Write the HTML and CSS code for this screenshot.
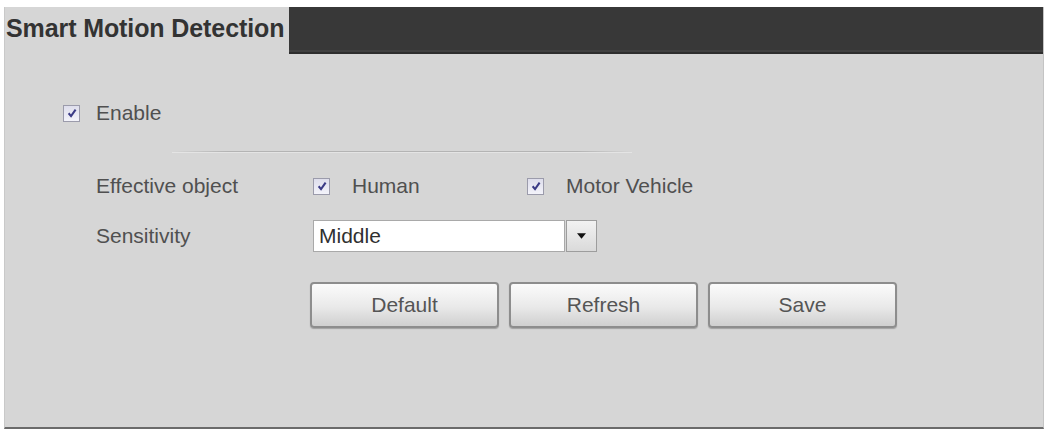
FILE: index.html
```html
<!DOCTYPE html>
<html lang="en">
<head>
  <meta charset="UTF-8">
  <title>Smart Motion Detection</title>
  <link rel="stylesheet" href="styles.css">
</head>
<body>
  <div class="panel">
    <div class="panel-head">
      <h1 class="title">Smart Motion Detection</h1>
      <div class="title-bar"></div>
    </div>

    <div class="panel-body">
      <label class="enable-row">
        <span class="check is-checked">
          <svg viewBox="0 0 10 10"><path d="M2.2 5.2 L4.2 7.6 L8 2.2"/></svg>
        </span>
        <span class="check-text">Enable</span>
      </label>

      <div class="divider"></div>

      <div class="form-row">
        <span class="form-label">Effective object</span>
        <div class="options">
          <label class="option">
            <span class="check is-checked">
              <svg viewBox="0 0 10 10"><path d="M2.2 5.2 L4.2 7.6 L8 2.2"/></svg>
            </span>
            <span class="check-text">Human</span>
          </label>
          <label class="option">
            <span class="check is-checked">
              <svg viewBox="0 0 10 10"><path d="M2.2 5.2 L4.2 7.6 L8 2.2"/></svg>
            </span>
            <span class="check-text">Motor Vehicle</span>
          </label>
        </div>
      </div>

      <div class="form-row select-row">
        <span class="form-label">Sensitivity</span>
        <div class="select">
          <span class="select-value">Middle</span>
          <span class="select-arrow">
            <svg viewBox="0 0 8 5"><path d="M0 0 H8 L4 5 Z"/></svg>
          </span>
        </div>
      </div>

      <div class="button-row">
        <button class="panel-button">Default</button>
        <button class="panel-button">Refresh</button>
        <button class="panel-button">Save</button>
      </div>
    </div>
  </div>
</body>
</html>
```

FILE: styles.css
```css
:root {
  --panel-bg: #d6d6d6;
  --bar-bg: #383838;
  --label: #505050;
  --check-mark: #3b3b86;
}

body {
  margin: 0;
  background: #ffffff;
  font-family: 'Liberation Sans', Arial, sans-serif;
}

.panel {
  margin: 7px 1px 0 4px;
  height: 420px;
  background-color: var(--panel-bg);
  border-left: 1px solid #c9c9c9;
  border-right: 1px solid #c4c4c4;
  border-bottom: 2px solid #6b6b6b;
}

.panel-head {
  display: flex;
  height: 47px;
}

.title {
  width: 283px;
  margin: 0;
  padding-left: 1px;
  font-size: 25px;
  font-weight: bold;
  line-height: 43px;
  letter-spacing: -0.1px;
  color: #333333;
  white-space: nowrap;
}

.title-bar {
  flex: 1;
  background-color: var(--bar-bg);
  border-bottom: 2px solid #2e2e2e;
  box-shadow: inset 0 -2px 0 #414141;
}

.panel-body {
  padding-top: 44px;
}

/* checkboxes */
.enable-row,
.option {
  display: flex;
  align-items: center;
}

.enable-row {
  height: 30px;
  padding-left: 58px;
}

.check {
  width: 15px;
  height: 15px;
  flex: none;
  display: flex;
  align-items: center;
  justify-content: center;
  border: 1px solid #9b9bab;
  background: linear-gradient(#dedeec, #f3f3fa);
}

.check svg {
  width: 12px;
  height: 12px;
  fill: none;
  stroke: var(--check-mark);
  stroke-width: 1.7;
}

.check-text {
  margin-left: 16px;
  font-size: 21px;
  color: var(--label);
}

.option .check-text {
  margin-left: 22px;
}

.divider {
  height: 1px;
  margin: 23px 0 0 167px;
  width: 460px;
  background: linear-gradient(90deg, rgba(170, 170, 170, 0), #b4b4b4 12%, #b4b4b4 88%, rgba(170, 170, 170, 0));
  box-shadow: 0 1px 0 #e4e4e4;
}

/* form rows */
.form-row {
  display: flex;
  align-items: center;
  height: 30px;
  margin-top: 19px;
  padding-left: 91px;
}

.form-label {
  width: 217px;
  font-size: 21px;
  color: var(--label);
}

.options {
  display: flex;
}

.option {
  width: 214px;
}

.select-row {
  height: 32px;
}

.select {
  display: flex;
  height: 32px;
}

.select-value {
  width: 245px;
  padding-left: 5px;
  background: #ffffff;
  border: 1px solid #a9a9a9;
  font-size: 21px;
  line-height: 30px;
  color: #303030;
}

.select-arrow {
  width: 29px;
  margin-left: 1px;
  display: flex;
  align-items: center;
  justify-content: center;
  border: 1px solid #9d9d9d;
  background: linear-gradient(#f2f2f2, #dadada);
}

.select-arrow svg {
  width: 9px;
  height: 6px;
  fill: #111111;
}

/* buttons */
.button-row {
  display: flex;
  gap: 10px;
  margin-top: 30px;
  padding-left: 305px;
}

.panel-button {
  width: 189px;
  height: 46px;
  padding: 0;
  border: 2px solid #8d8d8d;
  border-radius: 4px;
  background: linear-gradient(#fbfbfb, #e9e9e9 55%, #cfcfcf);
  box-shadow: 0 1px 1px rgba(0, 0, 0, 0.25);
  font-family: 'Liberation Sans', Arial, sans-serif;
  font-size: 21px;
  color: #555555;
  cursor: pointer;
}
```
